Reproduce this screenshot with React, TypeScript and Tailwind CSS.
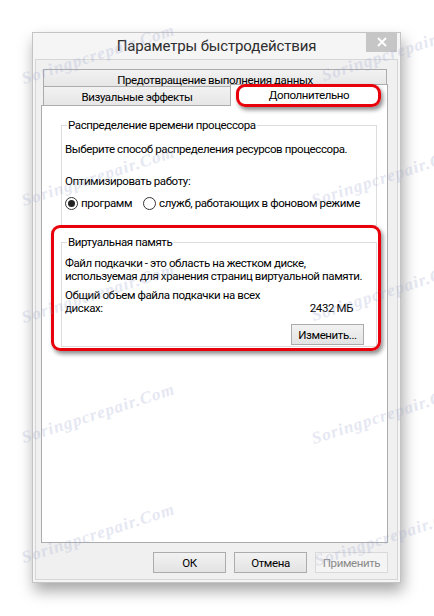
import React from "react";

const marks = [
  { x: 25, y: 88 },
  { x: 325, y: 85 },
  { x: 25, y: 210 },
  { x: 315, y: 210 },
  { x: 25, y: 327 },
  { x: 315, y: 325 },
  { x: 25, y: 447 },
  { x: 315, y: 448 },
  { x: 25, y: 567 },
  { x: 318, y: 570 },
];

function Radio({ checked }: { checked?: boolean }) {
  return (
    <span className="flex h-[13px] w-[13px] shrink-0 items-center justify-center rounded-full border border-[#333] bg-white">
      {checked && <span className="h-[7px] w-[7px] rounded-full bg-[#222]" />}
    </span>
  );
}

function Button({ children, disabled, className = "" }: { children: React.ReactNode; disabled?: boolean; className?: string }) {
  return (
    <div
      className={
        "flex h-[21px] w-[73px] items-center justify-center border " +
        (disabled
          ? "border-[#d9d9d9] bg-[#f4f4f4] text-[#8a8a8a] "
          : "border-[#acacac] bg-gradient-to-b from-[#f2f2f2] to-[#e3e3e3] text-black ") +
        className
      }
    >
      {children}
    </div>
  );
}

export default function App() {
  return (
    <div className="relative h-[616px] w-[434px] overflow-hidden bg-white pl-[32px] pt-[32px] font-['Roboto',sans-serif] text-[11.5px] leading-[14px] tracking-[-0.4px] text-black">
      {/* dialog window */}
      <div className="flex h-[551px] w-[369px] flex-col border border-[#c4c4c4] bg-[#f5f5f5] shadow-[2px_8px_14px_rgba(0,0,0,0.35)]">
        {/* title bar */}
        <div className="relative flex h-[26px] items-center justify-center">
          <span className="whitespace-nowrap text-[15px] leading-[18px] tracking-[-0.15px] text-[#2e2e2e]">Параметры быстродействия</span>
          <div className="absolute right-[3px] top-[-1px] flex h-[20px] w-[31px] items-center justify-center bg-[#c6c6c6]">
            <svg width="10" height="10" viewBox="0 0 10 10">
              <path d="M1 1L9 9M9 1L1 9" stroke="white" strokeWidth="1.8" />
            </svg>
          </div>
        </div>

        {/* client area */}
        <div className="mx-[2px] mb-[2px] flex flex-1 flex-col border border-[#d6d6d6] bg-[#f0f0f0] pl-[5px] pr-[9px] pt-[9px]">
          {/* tab control */}
          <div className="relative flex h-[474px] flex-col">
            <div className="ml-[2px] mr-[1px] flex h-[17px] items-center justify-center whitespace-nowrap border border-b-0 border-[#acacac] bg-gradient-to-b from-[#f2f2f2] to-[#e6e6e6] pt-[3px]">
              Предотвращение выполнения данных
            </div>
            <div className="flex h-[19px] items-end">
              <div className="ml-[2px] flex h-[19px] w-[187px] items-center justify-center whitespace-nowrap border-l border-t border-[#acacac] bg-gradient-to-b from-[#f2f2f2] to-[#e6e6e6] pt-[2px]">
                Визуальные эффекты
              </div>
              <div className="relative z-10 -mb-px flex h-[22px] flex-1 items-center justify-center whitespace-nowrap border-x border-t border-[#acacac] bg-white pb-[2px]">
                Дополнительно
              </div>
            </div>

            {/* tab page */}
            <div className="relative flex flex-1 flex-col whitespace-nowrap border border-[#acacac] bg-white pl-[19px]">
              <fieldset className="mt-[12px] h-[108px] w-[316px] min-w-0 border border-[#dcdcdc] px-[3px]">
                <legend className="ml-[2px] px-[1px] leading-[14px]">Распределение времени процессора</legend>
                <div className="mt-[10px]">Выберите способ распределения ресурсов процессора.</div>
                <div className="mt-[18px]">Оптимизировать работу:</div>
                <div className="mt-[8px] flex items-center">
                  <Radio checked />
                  <span className="ml-[3px]">программ</span>
                  <span className="ml-[11px]">
                    <Radio />
                  </span>
                  <span className="ml-[3px]">служб, работающих в фоновом режиме</span>
                </div>
              </fieldset>

              <fieldset className="mt-[9px] h-[112px] w-[316px] min-w-0 border border-[#dcdcdc] px-[3px]">
                <legend className="ml-[2px] px-[1px] leading-[14px]">Виртуальная память</legend>
                <div className="mt-[8px] leading-[13px]">
                  Файл подкачки - это область на жестком диске,
                  <br />
                  используемая для хранения страниц виртуальной памяти.
                </div>
                <div className="mt-[6px] flex items-end justify-between pr-[20px] leading-[13px]">
                  <span>
                    Общий объем файла подкачки на всех
                    <br />
                    дисках:
                  </span>
                  <span>2432 МБ</span>
                </div>
                <div className="mt-[9px] flex justify-end pr-[9px]">
                  <Button>Изменить...</Button>
                </div>
              </fieldset>

              {/* highlight around the virtual memory group */}
              <div className="pointer-events-none absolute left-[9px] top-[119px] h-[126px] w-[330px] rounded-[9px] border-[3px] border-[#e8000b] shadow-[2px_3px_4px_rgba(0,0,0,0.45)]" />
            </div>

            {/* highlight around the selected tab */}
            <div className="pointer-events-none absolute left-[195px] top-[15px] z-20 h-[23px] w-[145px] rounded-[9px] border-[3px] border-[#e8000b] shadow-[2px_3px_4px_rgba(0,0,0,0.45)]" />
          </div>

          {/* dialog buttons */}
          <div className="mt-[9px] flex justify-end gap-[8px]">
            <Button>ОК</Button>
            <Button>Отмена</Button>
            <Button disabled>Применить</Button>
          </div>
        </div>
      </div>

      {/* site watermark */}
      {marks.map((m, i) => (
        <span
          key={i}
          className="pointer-events-none absolute origin-bottom-left -rotate-[18deg] whitespace-nowrap font-['Liberation_Serif',serif] text-[17px] font-bold italic leading-[18px] tracking-[1px] text-[#9aa3cc] opacity-25"
          style={{ left: m.x, top: m.y - 18 }}
        >
          Soringpcrepair.Com
        </span>
      ))}
    </div>
  );
}
